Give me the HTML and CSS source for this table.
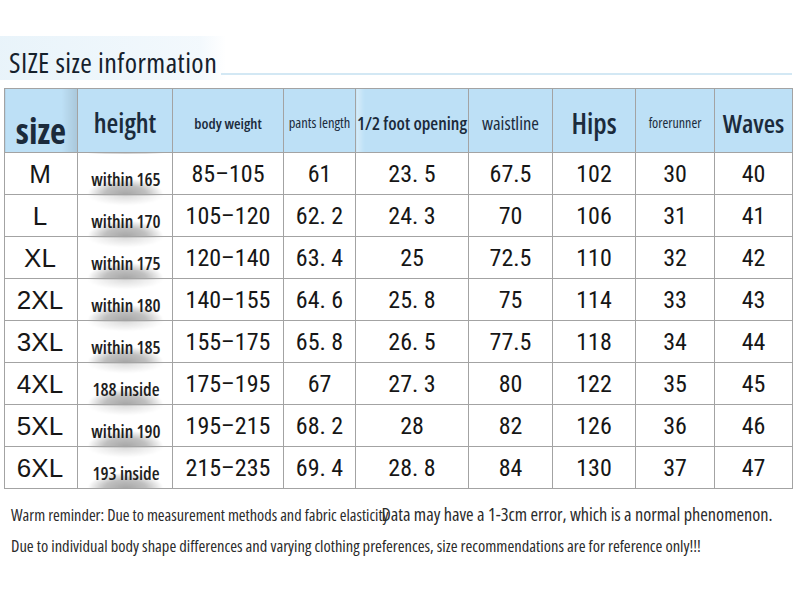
FILE: index.html
```html
<!DOCTYPE html>
<html>
<head>
<meta charset="utf-8">
<link rel="stylesheet" href="styles.css">
</head>
<body>
<div class="page">
  <div class="title-row">
    <h1 class="title">SIZE size information</h1>
    <div class="title-line"></div>
  </div>
  <table class="sizes">
    <colgroup>
      <col style="width:73px"><col style="width:95px"><col style="width:111px"><col style="width:72px"><col style="width:113px"><col style="width:84px"><col style="width:83px"><col style="width:79px"><col style="width:78px">
    </colgroup>
    <thead>
      <tr>
        <th class="h-size">size</th>
        <th class="h-height">height</th>
        <th class="h-bw">body weight</th>
        <th class="h-pl">pants length</th>
        <th class="h-fo">1/2 foot opening</th>
        <th class="h-wl">waistline</th>
        <th class="h-hips">Hips</th>
        <th class="h-fr">forerunner</th>
        <th class="h-waves">Waves</th>
      </tr>
    </thead>
    <tbody>
      <tr><td class="c-size">M</td><td class="c-h">within 165</td><td>85–105</td><td>61</td><td>23. 5</td><td>67.5</td><td>102</td><td>30</td><td>40</td></tr>
      <tr><td class="c-size">L</td><td class="c-h">within 170</td><td>105–120</td><td>62. 2</td><td>24. 3</td><td>70</td><td>106</td><td>31</td><td>41</td></tr>
      <tr><td class="c-size">XL</td><td class="c-h">within 175</td><td>120–140</td><td>63. 4</td><td>25</td><td>72.5</td><td>110</td><td>32</td><td>42</td></tr>
      <tr><td class="c-size">2XL</td><td class="c-h">within 180</td><td>140–155</td><td>64. 6</td><td>25. 8</td><td>75</td><td>114</td><td>33</td><td>43</td></tr>
      <tr><td class="c-size">3XL</td><td class="c-h">within 185</td><td>155–175</td><td>65. 8</td><td>26. 5</td><td>77.5</td><td>118</td><td>34</td><td>44</td></tr>
      <tr><td class="c-size">4XL</td><td class="c-h">188 inside</td><td>175–195</td><td>67</td><td>27. 3</td><td>80</td><td>122</td><td>35</td><td>45</td></tr>
      <tr><td class="c-size">5XL</td><td class="c-h">within 190</td><td>195–215</td><td>68. 2</td><td>28</td><td>82</td><td>126</td><td>36</td><td>46</td></tr>
      <tr><td class="c-size">6XL</td><td class="c-h">193 inside</td><td>215–235</td><td>69. 4</td><td>28. 8</td><td>84</td><td>130</td><td>37</td><td>47</td></tr>
    </tbody>
  </table>
  <p class="note note1">Warm reminder: Due to measurement methods and fabric elasticity<span class="note-b">Data may have a 1-3cm error, which is a normal phenomenon.</span></p>
  <p class="note note2">Due to individual body shape differences and varying clothing preferences, size recommendations are for reference only!!!</p>
</div>
</body>
</html>
```

FILE: styles.css
```css
html, body {
  margin: 0;
  padding: 0;
  background: #ffffff;
}
.page {
  width: 796px;
  height: 597px;
  padding-top: 36px;
  box-sizing: border-box;
  overflow: hidden;
  font-family: "Open Sans", "Roboto Condensed", sans-serif;
  font-stretch: 75%;
  color: #1c2a38;
}
.title-row {
  display: flex;
  align-items: flex-end;
  height: 44px;
  background: linear-gradient(90deg, rgba(214,234,246,0.55) 0px, rgba(228,241,250,0.45) 200px, rgba(255,255,255,0) 226px);
}
.title {
  margin: 0 0 0 9px;
  font-size: 28px;
  letter-spacing: 0.45px;
  font-weight: 500;
  line-height: 36px;
  color: #16212c;
  white-space: nowrap;
}
.title-line {
  flex: 1;
  height: 2px;
  margin: 0 4px 5px 4px;
  background: #d3e8f4;
}
.sizes {
  margin: 8px 0 0 4px;
  border-collapse: collapse;
  table-layout: fixed;
  width: 788px;
}
.sizes th, .sizes td {
  box-sizing: border-box;
  border: 1px solid #a3a3a3;
  padding: 0;
  text-align: center;
  white-space: nowrap;
  overflow: hidden;
}
.sizes th {
  height: 64px;
  line-height: 30px;
  background: #bde0f6;
  color: #1b2b3c;
  font-weight: 600;
  vertical-align: middle;
  padding-top: 5px;
}
.sizes th.h-size {
  font-size: 35px;
  font-weight: 700;
  vertical-align: bottom;
  padding: 0 0 6px 0;
  background: linear-gradient(90deg, #bde0f6 0px, #bde0f6 56px, #a9c7da 72px);
}
.sizes th.h-fo {
  background: linear-gradient(90deg, #d6ecf9 0px, #bde0f6 8px);
}
.h-height { font-size: 27px; }
.h-bw { font-size: 15px; }
.h-pl { font-size: 14.5px; font-weight: 500 !important; }
.h-fo { font-size: 18px; }
.h-wl { font-size: 18.5px; font-weight: 500 !important; }
.h-hips { font-size: 28px; }
.h-fr { font-size: 14px; font-weight: 500 !important; }
.h-waves { font-size: 26px; }
.sizes td {
  height: 42px;
  line-height: 30px;
  font-size: 24px;
  color: #161616;
  font-family: "Roboto Condensed", "Roboto", sans-serif;
  font-stretch: normal;
}
.sizes td.c-size {
  font-family: "Liberation Sans", "Arial", sans-serif;
  font-size: 26px;
  padding-right: 2px;
}
.sizes td.c-h {
  font-family: "Open Sans", sans-serif;
  font-stretch: 75%;
  font-size: 18px;
  font-weight: 600;
  color: #1e1e1e;
  vertical-align: bottom;
  line-height: 20px;
  padding-bottom: 5px;
  padding-left: 2px;
  background:
    radial-gradient(ellipse 38px 16px at 50% 100%, rgba(150,150,150,0.85) 0%, rgba(165,165,165,0.7) 55%, rgba(255,255,255,0) 100%),
    radial-gradient(ellipse 38px 10px at 50% 0%, rgba(190,190,190,0.55) 0%, rgba(255,255,255,0) 100%);
}
.sizes tbody tr:first-child td.c-h {
  background: radial-gradient(ellipse 38px 16px at 50% 100%, rgba(150,150,150,0.85) 0%, rgba(165,165,165,0.7) 55%, rgba(255,255,255,0) 100%);
}
.note {
  margin: 0 0 0 11px;
  color: #2b2b2b;
  white-space: nowrap;
  font-weight: 500;
}
.note1 {
  margin-top: 14px;
  font-size: 16.3px;
  line-height: 22px;
}
.note-b {
  font-size: 18.3px;
  margin-left: -7px;
}
.note2 {
  margin-top: 9px;
  font-size: 16.5px;
  line-height: 22px;
}
```
